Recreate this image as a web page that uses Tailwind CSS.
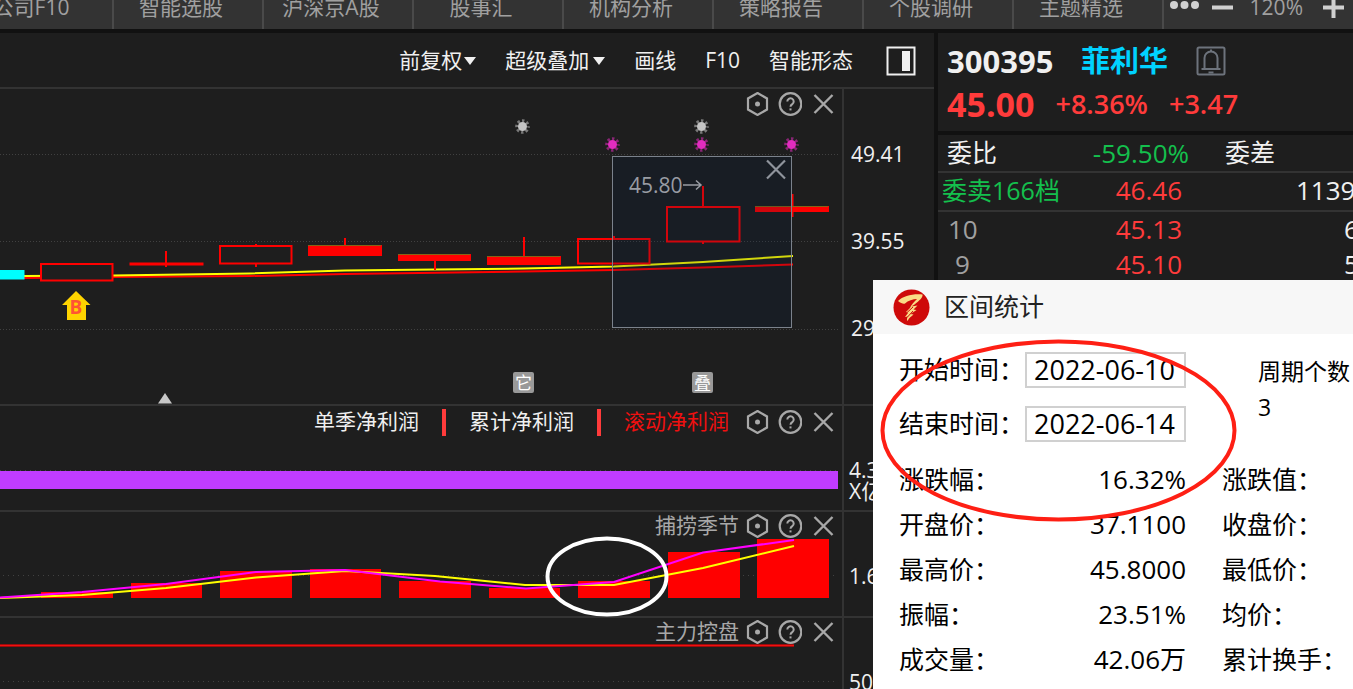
<!DOCTYPE html>
<html lang="zh-CN">
<head>
<meta charset="utf-8">
<meta name="viewport" content="width=device-width, initial-scale=1">
<title>300395 菲利华</title>
<script src="https://cdn.jsdelivr.net/npm/@tailwindcss/browser@4"></script>
</head>
<body class="relative flex h-screen flex-col overflow-hidden bg-[#1e1e1e] font-['Open_Sans','Noto_Sans_CJK_SC',sans-serif] text-[21px] text-[#f0f0f0]">

<!-- shared icons -->
<svg class="hidden" aria-hidden="true">
  <symbol id="i-hex" viewBox="0 0 24 24"><path d="M12.500 1 22 6.500v11L12.500 23 3 17.500V6.500Z" fill="none" stroke="currentColor" stroke-width="2.200"/><circle cx="12.500" cy="12" r="2.500" fill="currentColor"/></symbol>
  <symbol id="i-help" viewBox="0 0 24 24"><circle cx="12.500" cy="12" r="10.800" fill="none" stroke="currentColor" stroke-width="2.200"/><path d="M9.300 9.600a3.200 3.200 0 1 1 5 2.600c-1.200.8-1.800 1.300-1.800 2.600" fill="none" stroke="currentColor" stroke-width="2"/><rect x="11.500" y="16.400" width="2" height="2" fill="currentColor"/></symbol>
  <symbol id="i-x" viewBox="0 0 24 24"><path d="M3.500 3 21.500 21M21.500 3 3.500 21" fill="none" stroke="currentColor" stroke-width="2.400"/></symbol>
  <symbol id="i-gear" viewBox="-8 -8 16 16"><circle r="4.500" fill="currentColor"/><circle r="5.800" fill="none" stroke="currentColor" stroke-width="3" stroke-dasharray="2.400 2.155" stroke-dashoffset="1.200" opacity=".55"/></symbol>
</svg>

<nav class="flex h-[33px] shrink-0 border-b-4 border-[#111] bg-[#333] leading-[14px] text-[#a0a0a0]">
  <div class="-ml-9 flex whitespace-nowrap">
    <a href="#" class="w-[150px] border-r-2 border-[#4a4a4a] pr-[14px] text-center">公司F10</a>
    <a href="#" class="w-[150px] border-r-2 border-[#4a4a4a] pr-[14px] text-center">智能选股</a>
    <a href="#" class="w-[150px] border-r-2 border-[#4a4a4a] pr-[14px] text-center">沪深京A股</a>
    <a href="#" class="w-[150px] border-r-2 border-[#4a4a4a] pr-[14px] text-center">股事汇</a>
    <a href="#" class="w-[150px] border-r-2 border-[#4a4a4a] pr-[14px] text-center">机构分析</a>
    <a href="#" class="w-[150px] border-r-2 border-[#4a4a4a] pr-[14px] text-center">策略报告</a>
    <a href="#" class="w-[150px] border-r-2 border-[#4a4a4a] pr-[14px] text-center">个股调研</a>
    <a href="#" class="w-[150px] border-r-2 border-[#4a4a4a] pr-[14px] text-center">主题精选</a>
  </div>
  <div class="ml-auto flex items-start pr-2 text-[#d0d0d0]">
    <button aria-label="更多"><svg class="mr-3 h-4 w-8" viewBox="0 0 32 16" fill="currentColor"><circle cx="6" cy="5" r="4"/><circle cx="16.500" cy="5" r="4"/><circle cx="27" cy="5" r="4"/></svg></button>
    <button aria-label="缩小"><svg class="mr-4 h-4 w-[22px]" viewBox="0 0 22 16"><path d="M0 7.500H21" stroke="currentColor" stroke-width="4"/></svg></button>
    <span class="mr-5 text-[#a0a0a0]">120%</span>
    <button aria-label="放大"><svg class="h-5 w-[22px]" viewBox="0 0 22 20"><path d="M0 7.500H21M10.500-3V18" stroke="currentColor" stroke-width="4"/></svg></button>
  </div>
</nav>

<div class="flex min-h-0 flex-1">
  <main class="flex min-w-0 flex-1 flex-col">
    <div class="flex h-14 shrink-0 items-center justify-end gap-[29px] border-b-2 border-[#333] pt-px pr-[18px] whitespace-nowrap">
      <button class="flex items-center gap-[2px]">前复权<svg class="h-2 w-3" viewBox="0 0 12 8"><path d="M0 0h12L6 8Z" fill="currentColor"/></svg></button>
      <button class="flex items-center gap-1">超级叠加<svg class="h-2 w-3" viewBox="0 0 12 8"><path d="M0 0h12L6 8Z" fill="currentColor"/></svg></button>
      <button>画线</button>
      <button>F10</button>
      <button>智能形态</button>
      <button aria-label="侧栏" class="ml-1"><svg class="size-[30px]" viewBox="0 0 30 30"><rect x="1.500" y="1.500" width="27" height="27" fill="none" stroke="currentColor" stroke-width="2"/><rect x="16" y="5" width="8" height="20" fill="currentColor"/></svg></button>
    </div>

    <!-- candlestick panel -->
    <section class="flex h-[317px] shrink-0 border-b-2 border-[#333]">
      <div class="relative flex-1">
        <svg class="absolute inset-0 size-full overflow-visible">
          <g transform="translate(0,-89)">
            <path d="M0 154.500H838M0 241.500H838M0 329.500H838" stroke="#414141" stroke-dasharray="1 2"/>
            <g fill="none" stroke-width="2">
              <polyline stroke="#f00" points="24,278 113,277 250,276 345,274 420,273 524,271.500 614,270 703,267.500 793,264.500"/>
              <polyline stroke="#ff0" points="24,276 113,275.500 250,273.500 345,270.500 435,269.500 524,268.500 614,266.500 703,262 793,256"/>
            </g>
            <path d="M0 270H24.500V279.500H0Z" fill="#0ff"/>
            <g fill="#1e1e1e" stroke="#f00" stroke-width="2">
              <rect x="41" y="264" width="71.500" height="16.500"/>
              <rect x="220" y="246" width="71.500" height="17.500"/>
              <rect x="578" y="239" width="71.500" height="24.500" fill="none"/>
              <rect x="667" y="207" width="72.500" height="34.500"/>
              <path d="M166 251V267M256 244V246M256 264V267M345 238V256M435 254V270M524 237V257M614 236V239M703 186V207M703 242V244M792.500 194V217"/>
            </g>
            <path fill="#f00" d="M129.500 262.500h74v3h-74ZM308 245h74v11h-74ZM398 254h73v7h-73ZM487 256h74v9h-74ZM755 206h74v6h-74Z"/>
            <path stroke="#866316" d="M308 245.500H381M398 254.500H470M487 256.500H560M755 206.500H828"/>
            <rect x="612.500" y="156.500" width="179" height="171" fill="#001b40" fill-opacity=".18" stroke="#7b828c"/>
            <path d="M767 160.500 785 178.500M785 160.500 767 178.500" stroke="#8f949c" stroke-width="2.200"/>
            <text x="629" y="193" font-size="21" fill="#999ca3">45.80</text>
            <path d="M683 185H701M696 180.500 701 185 696 189.500" fill="none" stroke="#999ca3" stroke-width="1.500"/>
            <g color="#c4c4c4"><use href="#i-gear" x="514.500" y="118.500" width="16" height="16"/><use href="#i-gear" x="693.500" y="118.500" width="16" height="16"/></g>
            <g color="#e32cc0"><use href="#i-gear" x="604.500" y="136.500" width="16" height="16"/><use href="#i-gear" x="693.500" y="136.500" width="16" height="16"/><use href="#i-gear" x="783.500" y="136.500" width="16" height="16"/></g>
            <path d="M76 291 90.500 305H86V320H67V305H62Z" fill="#ffd400"/>
            <text x="76" y="314" font-size="19" font-weight="700" text-anchor="middle" fill="#ff5533">B</text>
            <path d="M158 403.500 165 393 172 403.500Z" fill="#c8c8c8"/>
            <g fill="#999"><rect x="513" y="372" width="21" height="21" rx="2"/><rect x="692" y="372" width="21" height="21" rx="2"/></g>
            <g fill="#fff" font-size="17" text-anchor="middle"><text x="523.500" y="389">它</text><text x="702.500" y="389">叠</text></g>
          </g>
        </svg>
        <div class="relative flex h-[29px] items-center justify-end gap-[9px] pr-[7px] text-[#a8a8a8]">
          <button aria-label="设置"><svg class="size-6"><use href="#i-hex"/></svg></button>
          <button aria-label="帮助"><svg class="size-6"><use href="#i-help"/></svg></button>
          <button aria-label="关闭"><svg class="size-6"><use href="#i-x"/></svg></button>
        </div>
      </div>
      <div class="w-[92px] border-l-2 border-[#333] pt-[22px] pl-[7px] leading-[87px]"><p>49.41</p><p>39.55</p><p>29</p></div>
    </section>

    <!-- net profit panel -->
    <section class="flex h-[106px] shrink-0 border-b-2 border-[#333]">
      <div class="relative flex-1">
        <svg class="absolute inset-0 size-full overflow-visible"><g transform="translate(0,-406)"><path d="M0 470.500H838" stroke="#414141" stroke-dasharray="1 4"/><path d="M0 471H838V489H0Z" fill="#c03cff"/></g></svg>
        <div class="relative flex h-8 items-center justify-end gap-[9px] pr-[7px] whitespace-nowrap text-[#a8a8a8]">
          <button class="mr-[14px] text-[#f0f0f0]">单季净利润</button>
          <span class="h-[27px] w-1 bg-[#ff3b3b]"></span>
          <button class="mx-[14px] text-[#f0f0f0]">累计净利润</button>
          <span class="h-[27px] w-1 bg-[#ff3b3b]"></span>
          <button class="mr-[7px] ml-[14px] text-[#f01010]">滚动净利润</button>
          <button aria-label="设置"><svg class="size-6"><use href="#i-hex"/></svg></button>
          <button aria-label="帮助"><svg class="size-6"><use href="#i-help"/></svg></button>
          <button aria-label="关闭"><svg class="size-6"><use href="#i-x"/></svg></button>
        </div>
      </div>
      <div class="w-[92px] border-l-2 border-[#333] pt-[54px] pl-[5px] leading-[21px]"><p>4.3</p><p>X亿</p></div>
    </section>

    <!-- momentum panel -->
    <section class="flex h-[106px] shrink-0 border-b-2 border-[#333]">
      <div class="relative flex-1">
        <svg class="absolute inset-0 size-full overflow-visible">
          <g transform="translate(0,-512)">
            <path d="M3 575.500H838" stroke="#414141" stroke-dasharray="1 4"/>
            <path fill="#f00" d="M41 592h72v6h-72ZM131 583h71v15h-71ZM220 571h72v27h-72ZM310 569h71v29h-71ZM399 581h72v17h-72ZM489 588h71v10h-71ZM578 581h72v17h-72ZM668 552h72v46h-72ZM757 539h72v59h-72Z"/>
            <g fill="none" stroke-width="2">
              <polyline stroke="#ff0" points="0,598 82,595 166,588 256,577.500 345,571 435,576 525,585 614,585 703,568 794,546"/>
              <polyline stroke="#f0f" points="0,597.500 82,592 166,584 256,572 345,570 440,581.500 526,588.500 614,582 703,552.500 794,540"/>
            </g>
            <ellipse cx="607" cy="576.500" rx="59.500" ry="38" fill="none" stroke="#fff" stroke-width="4"/>
          </g>
        </svg>
        <div class="relative flex h-[27px] items-center justify-end gap-[9px] pr-[7px] text-[#a8a8a8]">
          <span class="-mr-[3px]">捕捞季节</span>
          <button aria-label="设置"><svg class="size-6"><use href="#i-hex"/></svg></button>
          <button aria-label="帮助"><svg class="size-6"><use href="#i-help"/></svg></button>
          <button aria-label="关闭"><svg class="size-6"><use href="#i-x"/></svg></button>
        </div>
      </div>
      <div class="w-[92px] border-l-2 border-[#333] pt-[54px] pl-[5px] leading-[21px]"><p>1.6</p></div>
    </section>

    <!-- control panel -->
    <section class="flex min-h-0 flex-1">
      <div class="relative flex-1">
        <svg class="absolute inset-0 size-full"><g transform="translate(0,-618)"><path d="M3 681.500H838" stroke="#414141" stroke-dasharray="1 4"/><path d="M0 645.500H794" stroke="#9c0c0c" stroke-width="3"/><path d="M0 645.500H794" stroke="#f01010"/></g></svg>
        <div class="relative flex h-[27px] items-center justify-end gap-[9px] pr-[7px] text-[#a8a8a8]">
          <span class="-mr-[3px]">主力控盘</span>
          <button aria-label="设置"><svg class="size-6"><use href="#i-hex"/></svg></button>
          <button aria-label="帮助"><svg class="size-6"><use href="#i-help"/></svg></button>
          <button aria-label="关闭"><svg class="size-6"><use href="#i-x"/></svg></button>
        </div>
      </div>
      <div class="w-[92px] border-l-2 border-[#333] pt-[54px] pl-[5px] leading-[21px]"><p>50</p></div>
    </section>
  </main>

  <!-- quote column -->
  <aside class="w-[419px] shrink-0 overflow-hidden border-l-4 border-[#111] text-[26px] whitespace-nowrap">
    <header class="h-[102px] border-b-4 border-[#111] pt-[3px] pl-[9px]">
      <div class="flex h-[50px] items-center font-bold">
        <h1 class="w-[134px] text-[31px]">300395</h1>
        <span class="text-[29px] text-[#00d2ff]">菲利华</span>
        <button aria-label="提醒" class="ml-7 text-[#6d737c]"><svg class="size-[30px]" viewBox="0 0 30 30" fill="none" stroke="currentColor" stroke-width="2"><rect x="1.500" y="1.500" width="27" height="27" rx="1.500"/><path d="M8.500 22.500V12a6.500 6.500 0 0 1 13 0V22.500M5.500 23H24.500M15 3.500V6M12.500 26.500H17.500"/></svg></button>
      </div>
      <div class="flex h-9 items-center gap-[21px] text-[27px] font-semibold text-[#ff3b3b]"><span class="text-[34px] font-bold">45.00</span><span>+8.36%</span><span>+3.47</span></div>
    </header>
    <dl class="flex h-[38px] items-center border-b-2 border-[#333] pl-[9px]">
      <dt class="text-[25px]">委比</dt><dd class="w-[192px] text-right text-[#14c04d]">-59.50%</dd><dt class="ml-9 text-[25px]">委差</dt>
    </dl>
    <table class="w-full table-fixed border-collapse">
      <tr class="h-[38px] border-b-2 border-[#333] align-top leading-[35px]"><td class="w-[134px] pl-1 text-[25px] text-[#14c04d]">委卖166档</td><td class="w-[110px] text-right text-[#ff3b3b]">46.46</td><td class="pl-[114px]">1139</td></tr>
      <tr class="h-9 align-top leading-[34px]"><td class="pl-[10px] text-[#a0a0a0]">10</td><td class="text-right text-[#ff3b3b]">45.13</td><td class="pl-[162px]">6</td></tr>
      <tr class="h-9 align-top leading-[34px]"><td class="pl-[17px] text-[#a0a0a0]">9</td><td class="text-right text-[#ff3b3b]">45.10</td><td class="pl-[162px]">5</td></tr>
    </table>
  </aside>
</div>

<!-- interval statistics dialog, floating above the workspace -->
<div role="dialog" aria-labelledby="dlg-title" class="absolute top-[280px] right-0 bottom-0 w-[480px] overflow-hidden bg-white text-[25px] whitespace-nowrap text-black">
  <header class="flex h-[54px] items-center gap-[14px] bg-[#f7f7f7] pl-5 text-[#222]">
    <svg class="size-[37px]" viewBox="0 0 37 37"><circle cx="18.500" cy="18.500" r="18" fill="#ce0a0a"/><path d="M5 12C10 7 20 4.500 29.500 5.500c.5 3-3 6-8 10l-3 2 6-1-4 4 3 .5-6 4 3 .5c-2 2-4 2.500-6 6.500-1-1.500-.5-3 .5-4.500l-3 .5 3-4-2-1 4-4c1-3 4-6 7-9-4 0-9 1.500-12 4.500-1.500.5-4 0-7-2.500Z" fill="#f9dc86"/><path d="M13 24.500 20 18M14.500 28 20 22" stroke="#ce0a0a" stroke-width="1"/></svg>
    <h2 id="dlg-title">区间统计</h2>
  </header>
  <div class="flex gap-9 pt-[9px] pl-[26px]">
    <div class="w-[287px]">
      <div class="flex h-[54px] items-center justify-between"><label for="d1">开始时间：</label><input id="d1" value="2022-06-10" class="h-9 w-[161px] shrink-0 border-2 border-[#d0d0d0] pl-[7px] text-[27px]"></div>
      <div class="flex h-[54px] items-center justify-between"><label for="d2">结束时间：</label><input id="d2" value="2022-06-14" class="h-9 w-[161px] shrink-0 border-2 border-[#d0d0d0] pl-[7px] text-[27px]"></div>
      <dl class="pt-[6px] leading-[45px]">
        <div class="flex justify-between"><dt>涨跌幅：</dt><dd class="text-[26px]">16.32%</dd></div>
        <div class="flex justify-between"><dt>开盘价：</dt><dd class="text-[26px]">37.1100</dd></div>
        <div class="flex justify-between"><dt>最高价：</dt><dd class="text-[26px]">45.8000</dd></div>
        <div class="flex justify-between"><dt>振幅：</dt><dd class="text-[26px]">23.51%</dd></div>
        <div class="flex justify-between"><dt>成交量：</dt><dd class="text-[26px]">42.06万</dd></div>
      </dl>
    </div>
    <div>
      <div class="h-[108px] pt-[10px] pl-9 text-[23px] leading-9"><p>周期个数</p><p>3</p></div>
      <div class="pt-[6px] leading-[45px]"><p>涨跌值：</p><p>收盘价：</p><p>最低价：</p><p>均价：</p><p>累计换手：</p></div>
    </div>
  </div>
  <svg class="pointer-events-none absolute top-0 left-0 size-full"><ellipse cx="185.500" cy="150.500" rx="176" ry="89" fill="none" stroke="#fe1f14" stroke-width="4"/></svg>
</div>
</body>
</html>
